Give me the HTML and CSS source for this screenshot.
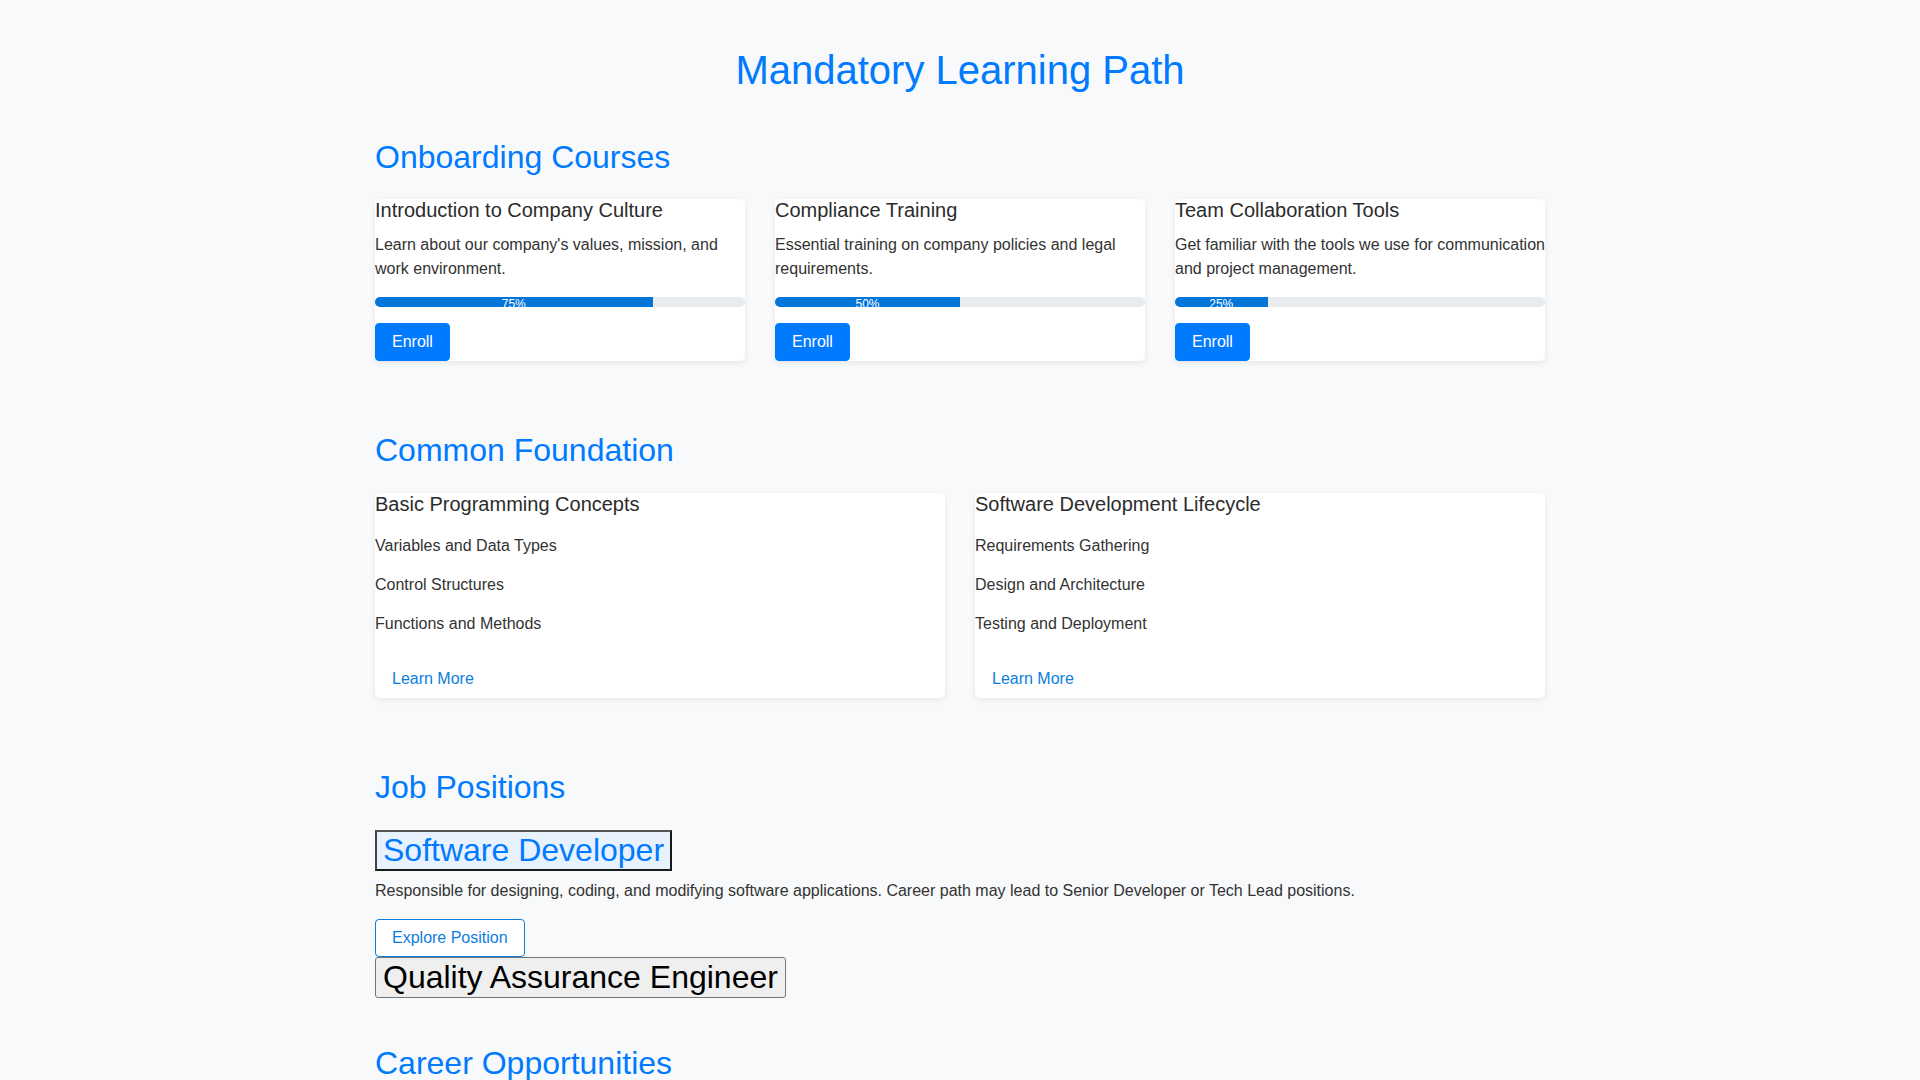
FILE: index.html
```html
<!DOCTYPE html>
<html lang="en">
<head>
<meta charset="utf-8">
<title>Mandatory Learning Path</title>
<link rel="stylesheet" href="styles.css">
</head>
<body>
<div class="container">
  <h1 class="page-title">Mandatory Learning Path</h1>

  <section class="section">
    <h2 class="section-title">Onboarding Courses</h2>
    <div class="grid grid-3">
      <div class="card">
        <h5 class="card-title">Introduction to Company Culture</h5>
        <p class="card-text">Learn about our company's values, mission, and work environment.</p>
        <div class="progress"><div class="progress-bar" style="width: 75%">75%</div></div>
        <div><button class="btn btn-primary">Enroll</button></div>
      </div>
      <div class="card">
        <h5 class="card-title">Compliance Training</h5>
        <p class="card-text">Essential training on company policies and legal requirements.</p>
        <div class="progress"><div class="progress-bar" style="width: 50%">50%</div></div>
        <div><button class="btn btn-primary">Enroll</button></div>
      </div>
      <div class="card">
        <h5 class="card-title">Team Collaboration Tools</h5>
        <p class="card-text">Get familiar with the tools we use for communication and project management.</p>
        <div class="progress"><div class="progress-bar" style="width: 25%">25%</div></div>
        <div><button class="btn btn-primary">Enroll</button></div>
      </div>
    </div>
  </section>

  <section class="section">
    <h2 class="section-title">Common Foundation</h2>
    <div class="grid grid-2">
      <div class="card">
        <h5 class="card-title">Basic Programming Concepts</h5>
        <ul class="topic-list">
          <li>Variables and Data Types</li>
          <li>Control Structures</li>
          <li>Functions and Methods</li>
        </ul>
        <div><a class="btn btn-link" href="#">Learn More</a></div>
      </div>
      <div class="card">
        <h5 class="card-title">Software Development Lifecycle</h5>
        <ul class="topic-list">
          <li>Requirements Gathering</li>
          <li>Design and Architecture</li>
          <li>Testing and Deployment</li>
        </ul>
        <div><a class="btn btn-link" href="#">Learn More</a></div>
      </div>
    </div>
  </section>

  <section class="section section-jobs">
    <h2 class="section-title">Job Positions</h2>
    <div class="job">
      <h3 class="job-heading"><button class="job-btn job-btn-active">Software Developer</button></h3>
      <p class="job-text">Responsible for designing, coding, and modifying software applications. Career path may lead to Senior Developer or Tech Lead positions.</p>
      <div><button class="btn btn-outline">Explore Position</button></div>
    </div>
    <div class="job">
      <h3 class="job-heading"><button class="job-btn">Quality Assurance Engineer</button></h3>
    </div>
  </section>

  <section class="section section-last">
    <h2 class="section-title">Career Opportunities</h2>
  </section>
</div>
</body>
</html>
```

FILE: styles.css
```css
* { box-sizing: border-box; }

html, body {
  margin: 0;
  padding: 0;
}

body {
  background: #f8f9fa;
  color: #333333;
  font-family: "Liberation Sans", Arial, Helvetica, sans-serif;
  font-size: 16px;
  line-height: 24px;
}

.container {
  width: 1170px;
  margin: 0 auto;
  padding-top: 46px;
}

.page-title {
  margin: 0 0 44px;
  font-size: 40px;
  font-weight: 400;
  line-height: 48px;
  color: #007bff;
  text-align: center;
}

.section {
  margin-bottom: 70px;
}

.section-jobs {
  margin-bottom: 46px;
}

.section-title {
  margin: 0 0 23px;
  font-size: 32px;
  font-weight: 400;
  line-height: 38.4px;
  color: #007bff;
}

.section-jobs .section-title {
  margin-bottom: 24px;
}

.grid {
  display: grid;
  column-gap: 30px;
}

.grid-3 { grid-template-columns: repeat(3, 1fr); }
.grid-2 { grid-template-columns: repeat(2, 1fr); }

.card {
  background: #ffffff;
  border-radius: 5px;
  box-shadow: 0 2px 6px rgba(0, 0, 0, 0.08);
}

.card-title {
  margin: 0 0 12px;
  font-size: 20px;
  font-weight: 400;
  line-height: 22px;
  color: #2b2b2b;
}

.card-text {
  margin: 0 0 16px;
}

.progress {
  height: 10px;
  background: #e9ecef;
  border-radius: 5px;
  overflow: hidden;
  margin-bottom: 16px;
}

.progress-bar {
  height: 100%;
  background: #0275d8;
  color: #ffffff;
  font-size: 12px;
  line-height: 15px;
  text-align: center;
  white-space: nowrap;
}

.btn {
  display: inline-block;
  font-family: inherit;
  font-size: 16px;
  line-height: 24px;
  padding: 6px 16px;
  border: 1px solid transparent;
  border-radius: 4px;
  cursor: pointer;
  text-decoration: none;
  vertical-align: top;
}

.btn-primary {
  background: #007bff;
  border-color: #007bff;
  color: #ffffff;
}

.btn-link {
  background: transparent;
  color: #0a7ee0;
}

.btn-outline {
  background: #ffffff;
  border-color: #0a7ee0;
  color: #0a7ee0;
}

.topic-list {
  list-style: none;
  margin: 1px 0 16px;
  padding: 0;
}

.topic-list li {
  padding: 7.5px 0;
}

.job-heading {
  margin: 0 0 8px;
  font-size: 32px;
  font-weight: 400;
  line-height: 1;
}

.job + .job .job-heading {
  margin-bottom: 0;
}

.job-btn {
  display: inline-block;
  font-family: "Liberation Sans", Arial, Helvetica, sans-serif;
  font-size: 32px;
  line-height: 35px;
  padding: 2px 7px;
  border: 1px solid #767676;
  border-radius: 3px;
  background: #efefef;
  color: #000000;
  vertical-align: top;
}

.job-btn-active {
  padding: 1px 6px;
  border: 2px solid #1a1a1a;
  border-top-color: #555555;
  border-left-color: #444444;
  border-radius: 0;
  background: #e8f1fe;
  color: #007bff;
}

.job-text {
  margin: 0 0 16px;
}

.section-last {
  margin-bottom: 40px;
}
```
